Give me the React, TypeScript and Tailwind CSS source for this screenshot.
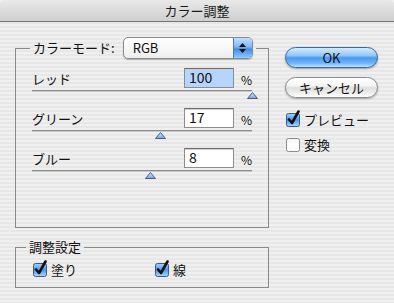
import React from "react";

type RowProps = {
    label: string;
    value: string;
    amount: number;
    selected?: boolean;
};

function Thumb() {
    return (
        <svg width="11" height="7" viewBox="0 0 11 7">
            <defs>
                <linearGradient id="thumb" x1="0" y1="0" x2="0" y2="1">
                    <stop offset="0" stopColor="#d6e9ff" />
                    <stop offset="1" stopColor="#6fa4e6" />
                </linearGradient>
            </defs>
            <path d="M5.5 0.5 L10.5 6.5 L0.5 6.5 Z" fill="url(#thumb)" stroke="#4a5f85" strokeWidth="1" strokeLinejoin="round" />
        </svg>
    );
}

function SliderRow({ label, value, amount, selected }: RowProps) {
    const pct = (amount + 100) / 2;
    return (
        <div className="h-[40px]">
            <div className="flex h-[20px] items-center">
                <span className="flex-1 pt-[1px]">{label}</span>
                <div
                    className={`h-[20px] w-[50px] border border-[#8d8d8d] border-t-[#6b6b6b] px-[4px] text-[14px] leading-[17px] shadow-[inset_0_1px_0_#cfcfcf] ${
                        selected ? "bg-[#b5d5fe]" : "bg-white"
                    }`}
                >
                    {value}
                </div>
                <span className="w-[18px] pt-[3px] text-right text-[12px]">%</span>
            </div>
            <div className="relative mt-[2px] h-[2px] border-b border-[#c9c9c9] bg-[#8b8b8b]">
                <div className="absolute top-[2px]" style={{ left: `calc(${pct}% - 5.5px)` }}>
                    <Thumb />
                </div>
            </div>
        </div>
    );
}

function Check({ checked }: { checked: boolean }) {
    return (
        <svg width="16" height="17" viewBox="0 0 16 17" className="shrink-0">
            <defs>
                <linearGradient id="cbOn" x1="0" y1="0" x2="0" y2="1">
                    <stop offset="0" stopColor="#a9d2fb" />
                    <stop offset="0.5" stopColor="#4b97ea" />
                    <stop offset="1" stopColor="#a8dbff" />
                </linearGradient>
                <linearGradient id="cbOff" x1="0" y1="0" x2="0" y2="1">
                    <stop offset="0" stopColor="#f4f4f4" />
                    <stop offset="0.5" stopColor="#ffffff" />
                    <stop offset="1" stopColor="#f7f7f7" />
                </linearGradient>
            </defs>
            <rect x="1.5" y="3.5" width="13" height="13" rx="2" fill={checked ? "url(#cbOn)" : "url(#cbOff)"} stroke={checked ? "#3d5a86" : "#8a8a8a"} />
            {checked && (
                <path d="M4 9.5 L7 13 L13.5 1.5" fill="none" stroke="#111" strokeWidth="2.6" strokeLinecap="round" strokeLinejoin="round" />
            )}
        </svg>
    );
}

function PopUp() {
    return (
        <div className="flex h-[22px] w-[130px] overflow-hidden rounded-[5px] border border-[#8a8a8a] bg-gradient-to-b from-white to-[#eeeeee] shadow-[0_1px_1px_rgba(0,0,0,0.25)]">
            <span className="flex-1 pl-[9px] text-[13px] leading-[20px]">RGB</span>
            <div className="flex w-[19px] flex-col items-center justify-center gap-[2px] border-l border-[#5577aa] bg-[linear-gradient(180deg,#bfe0ff_0%,#7fb7f2_45%,#3f8be6_55%,#8ccaff_100%)]">
                <svg width="7" height="4" viewBox="0 0 7 4">
                    <path d="M3.5 0 L7 4 L0 4 Z" fill="#111" />
                </svg>
                <svg width="7" height="4" viewBox="0 0 7 4">
                    <path d="M0 0 L7 0 L3.5 4 Z" fill="#111" />
                </svg>
            </div>
        </div>
    );
}

export default function App() {
    return (
        <div className="h-[303px] w-[394px] overflow-hidden bg-[repeating-linear-gradient(180deg,#efefef_0px,#efefef_2px,#e7e7e7_2px,#e7e7e7_4px)] font-['Noto_Sans_CJK_JP',sans-serif] text-[13px] text-[#111]">
            <div className="flex h-[22px] items-center justify-center rounded-t-[5px] border-b border-[#767676] bg-gradient-to-b from-[#e9e9e9] to-[#cfcfcf] text-[13px] text-[#1a1a1a]">
                カラー調整
            </div>
            <div className="flex">
                <div className="ml-[15px] flex w-[254px] flex-col">
                    <fieldset className="mt-[15px] h-[191px] min-w-0 border border-[#8a8a8a] px-[16px] pb-0">
                        <legend className="ml-[-2px] flex h-[22px] items-center whitespace-nowrap px-[3px]">
                            <span className="mr-[8px] whitespace-nowrap">カラーモード:</span>
                            <PopUp />
                        </legend>
                        <div className="pt-[9px]">
                            <SliderRow label="レッド" value="100" amount={100} selected />
                            <SliderRow label="グリーン" value="17" amount={17} />
                            <SliderRow label="ブルー" value="8" amount={8} />
                        </div>
                    </fieldset>
                    <fieldset className="mt-[11px] h-[49px] min-w-0 border border-[#8a8a8a] px-[16px]">
                        <legend className="ml-[-6px] px-[3px] leading-[16px]">調整設定</legend>
                        <div className="flex pt-[3px]">
                            <div className="flex w-[122px] items-center gap-[3px]">
                                <Check checked />
                                <span className="pt-[2px]">塗り</span>
                            </div>
                            <div className="flex items-center gap-[3px]">
                                <Check checked />
                                <span className="pt-[2px]">線</span>
                            </div>
                        </div>
                    </fieldset>
                </div>
                <div className="ml-[16px] flex w-[93px] flex-col pt-[25px]">
                    <div className="h-[21px] rounded-full border border-[#3f649e] bg-[linear-gradient(180deg,#d3ebff_0%,#92c6f8_40%,#4b98ee_52%,#6fb5f8_80%,#bde4ff_100%)] text-center text-[13px] leading-[19px] shadow-[0_1px_2px_rgba(0,0,0,0.35)]">
                        OK
                    </div>
                    <div className="mt-[9px] h-[21px] rounded-full border border-[#8a8a8a] bg-[linear-gradient(180deg,#ffffff_0%,#f5f5f5_40%,#dedede_52%,#efefef_80%,#ffffff_100%)] text-center text-[13px] leading-[19px] shadow-[0_1px_2px_rgba(0,0,0,0.3)]">
                        キャンセル
                    </div>
                    <div className="mt-[11px] flex h-[18px] items-center gap-[3px] leading-none">
                        <Check checked />
                        <span className="pt-[3px]">プレビュー</span>
                    </div>
                    <div className="mt-[7px] flex h-[18px] items-center gap-[3px] leading-none">
                        <Check checked={false} />
                        <span className="pt-[3px]">変換</span>
                    </div>
                </div>
            </div>
        </div>
    );
}
